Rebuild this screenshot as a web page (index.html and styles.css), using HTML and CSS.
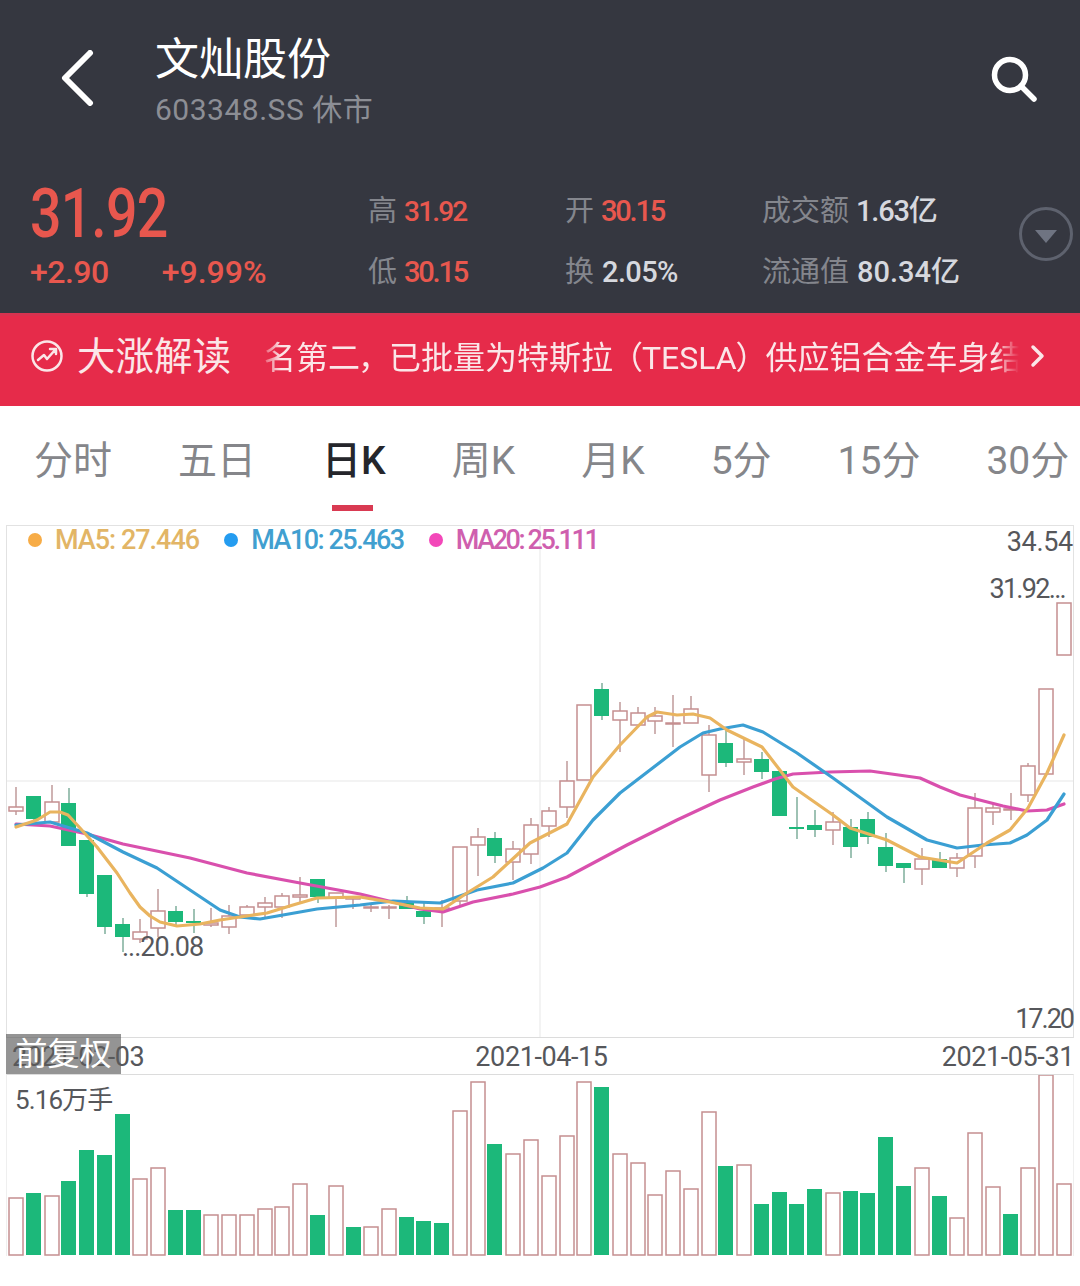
FILE: index.html
```html
<!DOCTYPE html>
<html lang="zh-CN">
<head>
    <meta charset="UTF-8">
    <meta name="viewport" content="width=device-width, initial-scale=1.0">
    <title>文灿股份</title>
    <link rel="stylesheet" href="styles.css">
</head>
<body>
    <header class="top">
        <div class="nav">
            <svg class="back" width="34" height="56" viewBox="0 0 34 56"><path d="M29 3 4 28l25 25"/></svg>
            <div class="name">
                <h1>文灿股份</h1>
                <p>603348.SS 休市</p>
            </div>
            <svg class="search" width="48" height="48" viewBox="0 0 48 48"><circle cx="20" cy="20" r="15.5"/><path d="M31 31 44 44"/></svg>
        </div>
        <div class="quote">
            <div class="price">
                <div class="last"><span>31.92</span></div>
                <div class="change"><span>+2.90</span><span class="pct">+9.99%</span></div>
            </div>
            <div class="stats">
                <div><i>高</i><b class="red small">31.92</b></div>
                <div><i>开</i><b class="red">30.15</b></div>
                <div><i>成交额</i><b class="tight">1.63亿</b></div>
                <div><i>低</i><b class="red">30.15</b></div>
                <div><i>换</i><b>2.05%</b></div>
                <div><i>流通值</i><b class="wide">80.34亿</b></div>
            </div>
            <svg class="more" width="56" height="56" viewBox="0 0 56 56"><circle cx="28" cy="28" r="25.5"/><path d="M17 24h22L28 37z"/></svg>
        </div>
    </header>

    <div class="banner">
        <svg class="trend" width="34" height="34" viewBox="0 0 34 34"><circle cx="17" cy="17" r="14.5"/><path d="M8 21l6-5 3 4 8-9M20 10h6v5"/></svg>
        <strong>大涨解读</strong>
        <div class="ticker"><span>名第二， 已批量为特斯拉 （TESLA） 供应铝合金车身结</span></div>
        <svg class="go" width="16" height="24" viewBox="0 0 16 24"><path d="M3 3l9 9-9 9"/></svg>
    </div>

    <nav class="tabs">
        <a>分时</a>
        <a>五日</a>
        <a class="on">日K</a>
        <a>周K</a>
        <a>月K</a>
        <a>5分</a>
        <a>15分</a>
        <a>30分</a>
    </nav>

    <section class="chart">
        <div class="plot">
            <svg class="kline" width="1066" height="511" viewBox="7 526 1066 511">
                <path class="grid" d="M7 781H1073M540 526V1037"/>
                <path class="wick" d="M16 787V815M52 785V823M140 919V943M158 889V937M211 908V927M229 905V934M247 905V918M265 897V917M282 893V918M300 877V903M336 893V927M353 897V909M371 905V912M389 905V919M442 900V927M460 847V906M478 828V876M513 841V880M531 818V864M549 807V837M567 761V818M584 705V780M620 702V752M638 707V727M655 707V734M673 695V747M691 696V723M709 725V792M744 738V775M833 812V845M922 848V885M957 853V877M975 793V868M993 803V825M1011 793V820M1028 763V802"/>
                <path class="wick-down" d="M34 796V822M69 788V846M87 840V897M105 875V934M123 918V952M176 906V927M194 909V933M318 879V903M407 896V909M424 903V924M495 832V863M602 683V720M726 730V767M762 752V779M780 771V816M797 797V839M815 810V837M851 819V858M868 812V844M886 833V872M904 863V883M940 852V868"/>
                <g class="up">
                    <rect x="9" y="807" width="14" height="4"/><rect x="45" y="802" width="14" height="20"/><rect x="133" y="932" width="14" height="7"/><rect x="151" y="911" width="14" height="17"/><rect x="204" y="923" width="14" height="2"/><rect x="222" y="916" width="14" height="11"/><rect x="240" y="907" width="14" height="8"/><rect x="258" y="903" width="14" height="4"/><rect x="275" y="896" width="14" height="11"/><rect x="293" y="895" width="14" height="2"/><rect x="329" y="893" width="14" height="5"/><rect x="346" y="897" width="14" height="2"/><rect x="364" y="907" width="14" height="1"/><rect x="382" y="907" width="14" height="1"/><rect x="435" y="908" width="14" height="2"/><rect x="453" y="847" width="14" height="54"/><rect x="471" y="837" width="14" height="8"/><rect x="506" y="849" width="14" height="13"/><rect x="524" y="825" width="14" height="29"/><rect x="542" y="811" width="14" height="15"/><rect x="560" y="781" width="14" height="26"/><rect x="577" y="705" width="14" height="75"/><rect x="613" y="711" width="14" height="9"/><rect x="631" y="713" width="14" height="12"/><rect x="648" y="716" width="14" height="5"/><rect x="666" y="723" width="14" height="1"/><rect x="684" y="709" width="14" height="14"/><rect x="702" y="735" width="14" height="40"/><rect x="737" y="759" width="14" height="3"/><rect x="826" y="822" width="14" height="8"/><rect x="915" y="859" width="14" height="10"/><rect x="950" y="858" width="14" height="10"/><rect x="968" y="808" width="14" height="48"/><rect x="986" y="808" width="14" height="4"/><rect x="1004" y="809" width="14" height="1"/><rect x="1021" y="766" width="14" height="29"/><rect x="1039" y="689" width="14" height="85"/><rect x="1057" y="603" width="14" height="52"/>
                </g>
                <g class="down">
                    <rect x="26" y="796" width="15" height="23"/><rect x="61" y="803" width="15" height="43"/><rect x="79" y="840" width="15" height="54"/><rect x="97" y="875" width="15" height="52"/><rect x="115" y="924" width="15" height="13"/><rect x="168" y="911" width="15" height="11"/><rect x="186" y="921" width="15" height="2"/><rect x="310" y="879" width="15" height="18"/><rect x="399" y="903" width="15" height="6"/><rect x="416" y="911" width="15" height="6"/><rect x="487" y="838" width="15" height="18"/><rect x="594" y="689" width="15" height="27"/><rect x="718" y="743" width="15" height="20"/><rect x="754" y="759" width="15" height="13"/><rect x="772" y="771" width="15" height="45"/><rect x="789" y="827" width="15" height="2"/><rect x="807" y="825" width="15" height="5"/><rect x="843" y="827" width="15" height="20"/><rect x="860" y="819" width="15" height="18"/><rect x="878" y="847" width="15" height="19"/><rect x="896" y="863" width="15" height="5"/><rect x="932" y="859" width="15" height="9"/>
                </g>
                <polyline class="ma20" points="16,824 50,826 87,834 123,844 190,858 247,873 300,883 360,894 393,902 420,909 443,912 473,902 513,894 540,887 567,877 627,845 677,820 720,800 753,787 775,779 793,774 830,772 870,771 920,778 940,787 960,795 1003,806 1027,811 1047,810 1064,804"/>
                <polyline class="ma10" points="16,825 50,822 70,828 87,833 123,852 157,868 190,890 220,910 240,917 260,919 283,915 317,909 360,905 393,901 440,903 477,890 513,883 543,868 567,853 593,820 620,793 650,770 680,747 703,733 720,729 743,725 763,732 797,753 833,778 887,817 927,840 957,848 983,845 1010,843 1027,835 1047,820 1064,794"/>
                <polyline class="ma5" points="16,827 37,820 50,812 60,812 68,815 80,828 97,847 117,873 130,893 140,907 150,916 160,922 177,926 200,924 220,920 240,917 267,913 293,905 317,898 360,897 390,902 420,908 443,909 467,893 493,877 530,843 567,824 593,777 620,745 647,717 657,712 677,715 693,714 710,718 727,730 762,747 793,787 833,815 850,828 887,840 920,857 957,863 987,843 1010,830 1028,808 1047,773 1064,735"/>
            </svg>
            <div class="legend">
                <span class="l5">MA5: 27.446</span>
                <span class="l10">MA10: 25.463</span>
                <span class="l20">MA20: 25.111</span>
            </div>
            <span class="tag max">34.54</span>
            <span class="tag high">31.92...</span>
            <span class="tag low">...20.08</span>
            <span class="tag min">17.20</span>
        </div>
        <div class="dates">
            <span>2021-02-03</span>
            <span class="mid">2021-04-15</span>
            <span>2021-05-31</span>
            <em>前复权</em>
        </div>
        <div class="volume">
            <svg width="1066" height="181" viewBox="7 1075 1066 181">
                <g class="up">
                    <rect x="9" y="1198" width="14" height="57"/><rect x="45" y="1196" width="14" height="59"/><rect x="133" y="1179" width="14" height="76"/><rect x="151" y="1168" width="14" height="87"/><rect x="204" y="1215" width="14" height="40"/><rect x="222" y="1215" width="14" height="40"/><rect x="240" y="1215" width="14" height="40"/><rect x="258" y="1209" width="14" height="46"/><rect x="275" y="1207" width="14" height="48"/><rect x="293" y="1184" width="14" height="71"/><rect x="329" y="1186" width="14" height="69"/><rect x="364" y="1227" width="14" height="28"/><rect x="382" y="1209" width="14" height="46"/><rect x="453" y="1111" width="14" height="144"/><rect x="471" y="1082" width="14" height="173"/><rect x="506" y="1154" width="14" height="101"/><rect x="524" y="1140" width="14" height="115"/><rect x="542" y="1176" width="14" height="79"/><rect x="560" y="1136" width="14" height="119"/><rect x="577" y="1082" width="14" height="173"/><rect x="613" y="1154" width="14" height="101"/><rect x="631" y="1163" width="14" height="92"/><rect x="648" y="1195" width="14" height="60"/><rect x="666" y="1171" width="14" height="84"/><rect x="684" y="1189" width="14" height="66"/><rect x="702" y="1112" width="14" height="143"/><rect x="737" y="1165" width="14" height="90"/><rect x="826" y="1193" width="14" height="62"/><rect x="915" y="1168" width="14" height="87"/><rect x="950" y="1218" width="14" height="37"/><rect x="968" y="1133" width="14" height="122"/><rect x="986" y="1187" width="14" height="68"/><rect x="1021" y="1168" width="14" height="87"/><rect x="1039" y="1075" width="14" height="180"/><rect x="1057" y="1184" width="14" height="71"/>
                </g>
                <g class="down">
                    <rect x="26" y="1193" width="15" height="62"/><rect x="61" y="1181" width="15" height="74"/><rect x="79" y="1150" width="15" height="105"/><rect x="97" y="1155" width="15" height="100"/><rect x="115" y="1114" width="15" height="141"/><rect x="168" y="1210" width="15" height="45"/><rect x="186" y="1210" width="15" height="45"/><rect x="310" y="1215" width="15" height="40"/><rect x="346" y="1227" width="15" height="28"/><rect x="399" y="1217" width="15" height="38"/><rect x="416" y="1221" width="15" height="34"/><rect x="434" y="1223" width="15" height="32"/><rect x="487" y="1144" width="15" height="111"/><rect x="594" y="1087" width="15" height="168"/><rect x="718" y="1166" width="15" height="89"/><rect x="754" y="1204" width="15" height="51"/><rect x="772" y="1192" width="15" height="63"/><rect x="789" y="1204" width="15" height="51"/><rect x="807" y="1189" width="15" height="66"/><rect x="843" y="1191" width="15" height="64"/><rect x="860" y="1193" width="15" height="62"/><rect x="878" y="1137" width="15" height="118"/><rect x="896" y="1186" width="15" height="69"/><rect x="932" y="1196" width="15" height="59"/><rect x="1003" y="1214" width="15" height="41"/>
                </g>
            </svg>
            <span class="tag vol">5.16万手</span>
        </div>
    </section>
</body>
</html>
```

FILE: styles.css
```css
* {
    box-sizing: border-box;
}

body {
    margin: 0;
    background-color: #fff;
    font-family: Roboto, "Noto Sans CJK SC", sans-serif;
}

svg {
    display: block;
    fill: none;
}

/* header */
.top {
    height: 313px;
    background-color: #353740;
}

.nav {
    display: flex;
    height: 173px;
    padding: 35px 42px 0 61px;
}

.back {
    margin-top: 15px;
}

.back path {
    stroke: #fff;
    stroke-width: 6;
    stroke-linecap: round;
    stroke-linejoin: round;
}

.name {
    margin-left: 60px;
}

.name h1 {
    margin: 0;
    color: #fff;
    font-size: 44px;
    font-weight: 400;
    line-height: 50px;
}

.name p {
    margin: 4px 0 0;
    color: #8c8e95;
    font-size: 30px;
    line-height: 42px;
    letter-spacing: 0.5px;
}

.search {
    margin: 20px 0 0 auto;
}

.search circle,
.search path {
    stroke: #fff;
    stroke-width: 5.5;
    stroke-linecap: round;
}

.quote {
    display: flex;
    padding-left: 30px;
}

.price {
    width: 338px;
    color: #e8574e;
}

.last {
    margin-top: 5px;
    font-size: 68px;
    font-weight: 500;
    line-height: 72px;
    letter-spacing: -1px;
}

.last span {
    display: inline-block;
    transform: scaleX(0.815);
    transform-origin: left;
}

.change {
    display: flex;
    gap: 53px;
    margin-top: 3px;
    font-size: 32px;
    font-weight: 500;
    line-height: 38px;
    letter-spacing: -0.5px;
}

.change .pct {
    letter-spacing: 0;
}

.stats {
    display: grid;
    grid-template-columns: 197px 197px 257px;
    grid-auto-rows: 61px;
    margin-top: 13px;
    font-size: 29px;
    line-height: 50px;
}

.stats i {
    margin-right: 8px;
    color: #84868d;
    font-style: normal;
}

.stats b {
    color: #d6d8de;
    font-weight: 500;
    letter-spacing: -0.6px;
}

.stats b.tight {
    margin-left: -1px;
    letter-spacing: -1.2px;
}

.stats b.wide {
    letter-spacing: 0;
}

.stats b.red {
    margin-left: -1px;
    color: #e8574e;
    letter-spacing: -2.2px;
}

.stats b.small {
    font-size: 28px;
    letter-spacing: -1.8px;
}

.more {
    margin: 33px 0 0 -1px;
}

.more circle {
    stroke: #5e626e;
    stroke-width: 3;
}

.more path {
    fill: #6f7482;
}

/* banner */
.banner {
    display: flex;
    align-items: center;
    height: 93px;
    padding: 0 0 10px 30px;
    background-color: #e62b4a;
    border-top: 3px solid #d8324f;
    color: #fbe6e8;
}

.trend circle,
.trend path,
.go path {
    stroke: #fbe6e8;
    stroke-width: 2.5;
    stroke-linecap: round;
    stroke-linejoin: round;
}

.go path {
    stroke-width: 3.5;
}

.banner strong {
    margin: -6px 0 0 13px;
    font-size: 38.5px;
    font-weight: 400;
    white-space: nowrap;
}

.ticker {
    overflow: hidden;
    width: 776px;
    margin: -2px 0 0 26px;
    font-size: 32px;
    white-space: nowrap;
    word-spacing: 5px;
    font-feature-settings: "palt";
    -webkit-mask-image: linear-gradient(90deg, transparent, #000 24px, #000 738px, transparent 762px);
    mask-image: linear-gradient(90deg, transparent, #000 24px, #000 738px, transparent 762px);
}

.ticker span {
    margin-left: 7px;
}

.go {
    margin-left: -3px;
}

/* tabs */
.tabs {
    display: flex;
    gap: 66px;
    height: 119px;
    padding: 29px 0 0 34px;
    font-size: 39px;
    line-height: 52px;
    color: #85868a;
    white-space: nowrap;
}

.tabs a {
    position: relative;
}

.tabs .on {
    color: #25262b;
    font-weight: 500;
}

.tabs .on::after {
    content: "";
    position: absolute;
    top: 70px;
    left: 10px;
    width: 41px;
    height: 6px;
    background-color: #d93a52;
}

/* chart */
.chart {
    margin: 0 6px;
    color: #56575b;
    font-size: 27px;
}

.plot {
    position: relative;
    height: 513px;
    border: 1px solid #e2e2e2;
    border-bottom-color: #dcdcdc;
}

.kline {
    overflow: hidden;
}

.grid {
    stroke: #efefef;
    stroke-width: 1.5;
}

.wick {
    stroke: #c09a9a;
    stroke-width: 1.5;
}

.wick-down {
    stroke: #7fae9c;
    stroke-width: 1.5;
}

.up rect {
    fill: #fff;
    stroke: #c58f90;
    stroke-width: 1.5;
}

.down rect {
    fill: #1cb87a;
}

.ma5,
.ma10,
.ma20 {
    stroke-width: 3.2;
    stroke-linejoin: round;
    stroke-linecap: round;
}

.ma5 {
    stroke: #e9b45f;
}

.ma10 {
    stroke: #3b9fd3;
}

.ma20 {
    stroke: #d950ad;
}

.legend {
    position: absolute;
    top: -1px;
    left: 48px;
    display: flex;
    gap: 52px;
    font-size: 27px;
    font-weight: 500;
    line-height: 30px;
}

.legend span {
    position: relative;
}

.legend span::before {
    content: "";
    position: absolute;
    top: 8px;
    left: -27px;
    width: 14px;
    height: 14px;
    border-radius: 50%;
}

.legend .l5 {
    color: #e2b566;
    letter-spacing: -1px;
}

.legend .l5::before {
    background-color: #f7ac46;
}

.legend .l10 {
    color: #419fd0;
    letter-spacing: -1.5px;
}

.legend .l10::before {
    background-color: #249cf0;
}

.legend .l20 {
    color: #cf5fae;
    letter-spacing: -2.4px;
}

.legend .l20::before {
    background-color: #f347b9;
}

.tag {
    position: absolute;
    line-height: 32px;
    white-space: nowrap;
    letter-spacing: -0.3px;
}

.max {
    top: 0;
    right: 0;
}

.high {
    top: 47px;
    right: 8px;
    letter-spacing: -1.7px;
}

.low {
    top: 405px;
    left: 115px;
    letter-spacing: -1px;
}

.min {
    bottom: 2px;
    right: 0;
    letter-spacing: -2px;
}

.dates {
    position: relative;
    display: flex;
    justify-content: space-between;
    height: 36px;
    padding-left: 6px;
    line-height: 38px;
    letter-spacing: -0.4px;
}

.dates .mid {
    margin-left: -3px;
}

.dates em {
    position: absolute;
    top: -4px;
    left: 0;
    width: 115px;
    height: 40px;
    background-color: rgba(90, 90, 90, 0.65);
    color: #fff;
    font-size: 32px;
    font-style: normal;
    line-height: 40px;
    text-align: center;
    letter-spacing: 0;
}

.volume {
    position: relative;
    height: 182px;
    border: 1px solid #efefef;
    border-top-color: #dcdcdc;
    border-bottom: 0;
}

.vol {
    top: 9px;
    left: 8px;
    font-size: 26px;
    letter-spacing: -0.9px;
}
```
